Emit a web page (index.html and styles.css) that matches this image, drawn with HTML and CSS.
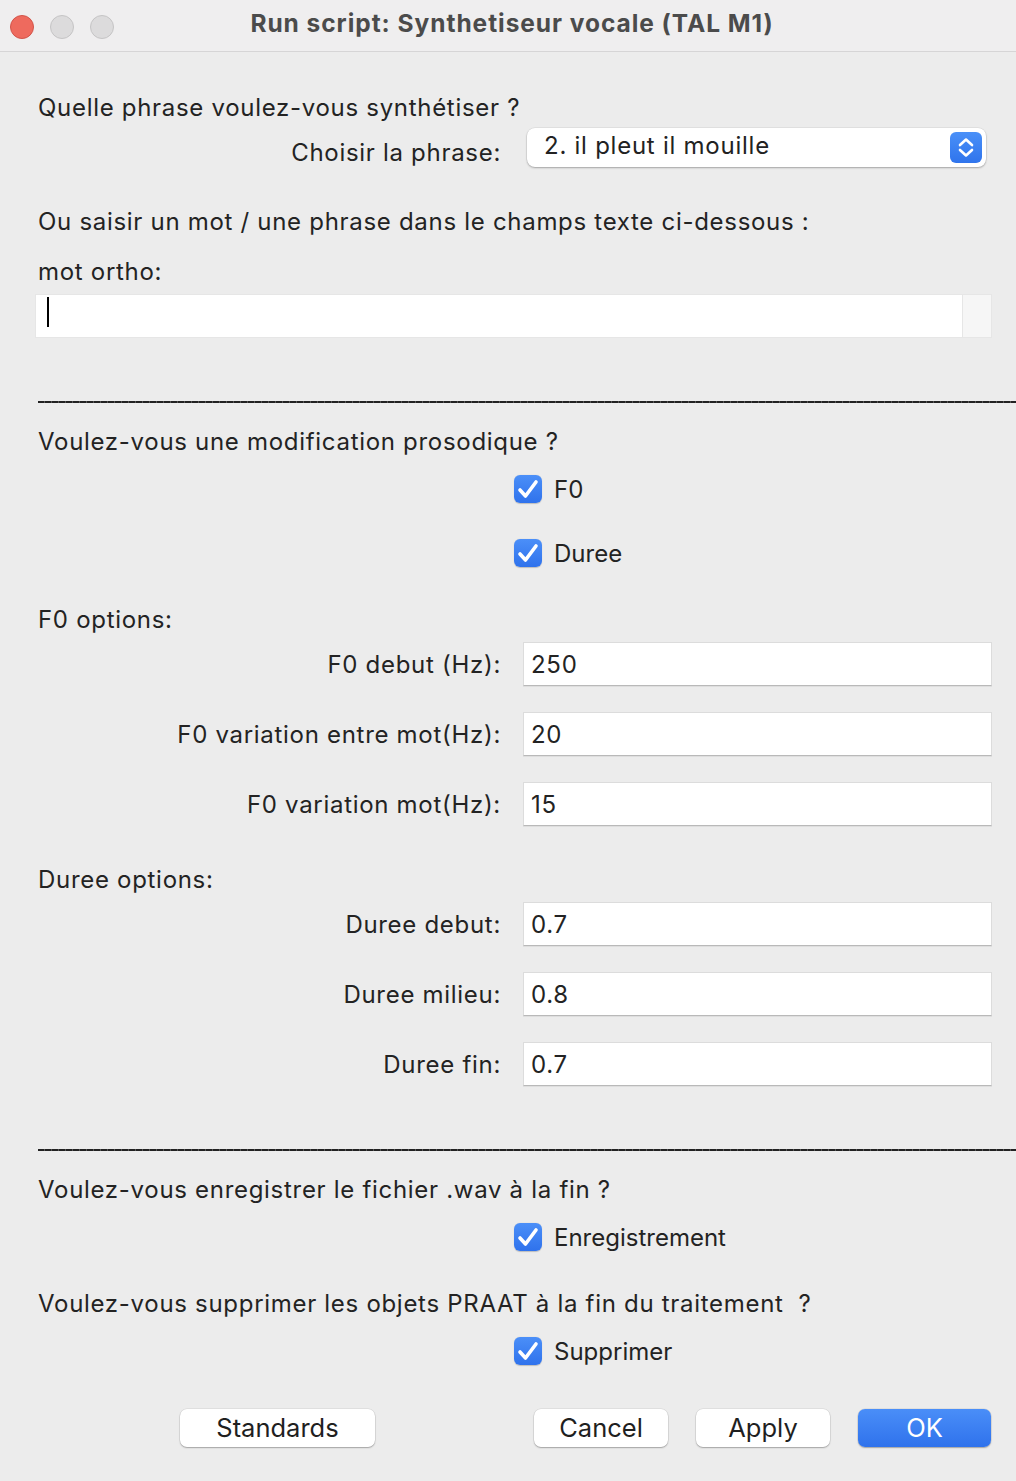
FILE: index.html
```html
<!DOCTYPE html>
<html lang="fr">
<head>
<meta charset="utf-8">
<title>Run script</title>
<link rel="stylesheet" href="styles.css">
</head>
<body>
<div class="window">
  <div class="titlebar">
    <div class="lights">
      <span class="light red"></span>
      <span class="light gray"></span>
      <span class="light gray"></span>
    </div>
    <div class="title">Run script: Synthetiseur vocale (TAL M1)</div>
  </div>

  <div class="content">
    <div class="line m40">Quelle phrase voulez-vous synthétiser ?</div>
    <div class="row select-row m3">
      <div class="label">Choisir la phrase:</div>
      <div class="select">
        <span class="select-text">2. il pleut il mouille</span>
        <span class="stepper">
          <svg width="32" height="31" viewBox="0 0 32 31">
            <path d="M10 13 L16 7.5 L22 13" fill="none" stroke="#fff" stroke-width="2.6" stroke-linecap="round" stroke-linejoin="round"/>
            <path d="M10 18 L16 23.5 L22 18" fill="none" stroke="#fff" stroke-width="2.6" stroke-linecap="round" stroke-linejoin="round"/>
          </svg>
        </span>
      </div>
    </div>
    <div class="line m39">Ou saisir un mot / une phrase dans le champs texte ci-dessous :</div>
    <div class="line m18">mot ortho:</div>
    <div class="textarea m6">
      <div class="textarea-main"><span class="caret"></span></div>
      <div class="textarea-side"></div>
    </div>

    <div class="separator m63"></div>

    <div class="line m23">Voulez-vous une modification prosodique ?</div>
    <div class="check m15"><span class="box"><svg width="28" height="28" viewBox="0 0 28 28"><path d="M6 15 L11.5 21 L22 7" fill="none" stroke="#fff" stroke-width="3.6" stroke-linecap="round" stroke-linejoin="round"/></svg></span><span class="check-label">F0</span></div>
    <div class="check m32"><span class="box"><svg width="28" height="28" viewBox="0 0 28 28"><path d="M6 15 L11.5 21 L22 7" fill="none" stroke="#fff" stroke-width="3.6" stroke-linecap="round" stroke-linejoin="round"/></svg></span><span class="check-label">Duree</span></div>

    <div class="line m35">F0 options:</div>
    <div class="row field-row m6"><div class="label">F0 debut (Hz):</div><div class="field">250</div></div>
    <div class="row field-row m26"><div class="label">F0 variation entre mot(Hz):</div><div class="field">20</div></div>
    <div class="row field-row m26"><div class="label">F0 variation mot(Hz):</div><div class="field">15</div></div>

    <div class="line m38">Duree options:</div>
    <div class="row field-row m6"><div class="label">Duree debut:</div><div class="field">0.7</div></div>
    <div class="row field-row m26"><div class="label">Duree milieu:</div><div class="field">0.8</div></div>
    <div class="row field-row m26"><div class="label">Duree fin:</div><div class="field">0.7</div></div>

    <div class="separator m63"></div>

    <div class="line m23">Voulez-vous enregistrer le fichier .wav à la fin ?</div>
    <div class="check m15"><span class="box"><svg width="28" height="28" viewBox="0 0 28 28"><path d="M6 15 L11.5 21 L22 7" fill="none" stroke="#fff" stroke-width="3.6" stroke-linecap="round" stroke-linejoin="round"/></svg></span><span class="check-label">Enregistrement</span></div>
    <div class="line m35">Voulez-vous supprimer les objets PRAAT à la fin du traitement&nbsp; ?</div>
    <div class="check m15"><span class="box"><svg width="28" height="28" viewBox="0 0 28 28"><path d="M6 15 L11.5 21 L22 7" fill="none" stroke="#fff" stroke-width="3.6" stroke-linecap="round" stroke-linejoin="round"/></svg></span><span class="check-label">Supprimer</span></div>

    <div class="buttons m42">
      <div class="btn btn-standards">Standards</div>
      <div class="btn-group">
        <div class="btn btn-cancel">Cancel</div>
        <div class="btn btn-apply">Apply</div>
        <div class="btn btn-ok">OK</div>
      </div>
    </div>
  </div>
</div>
</body>
</html>
```

FILE: styles.css
```css
* { box-sizing: border-box; }
html, body {
  margin: 0;
  padding: 0;
  background: #ececec;
}
body {
  width: 1016px;
  height: 1481px;
  overflow: hidden;
  font-family: Inter, "Liberation Sans", "Noto Sans", sans-serif;
  color: #232323;
}
.window { width: 1016px; }

.titlebar {
  height: 52px;
  background: #efeeef;
  border-bottom: 1px solid #d6d5d6;
  display: flex;
  align-items: center;
  position: relative;
}
.lights {
  display: flex;
  gap: 16px;
  padding-left: 10px;
  padding-top: 2px;
}
.light {
  width: 24px;
  height: 24px;
  border-radius: 50%;
  display: block;
}
.light.red { background: #ee6a5e; border: 1px solid #d2544a; }
.light.gray { background: #dcdbdc; border: 1px solid #c5c4c5; }
.title {
  flex: 1;
  text-align: center;
  font-weight: 700;
  font-size: 24.5px;
  letter-spacing: 0.95px;
  color: #4b4b4b;
  margin-right: 104px;
  margin-left: -2px;
  padding-bottom: 6px;
  white-space: nowrap;
}

.content {
  display: flex;
  flex-direction: column;
}
.m3 { margin-top: 3px; }
.m6 { margin-top: 6px; }
.m15 { margin-top: 15px; }
.m18 { margin-top: 18px; }
.m23 { margin-top: 23px; }
.m26 { margin-top: 26px; }
.m32 { margin-top: 32px; }
.m35 { margin-top: 35px; }
.m38 { margin-top: 38px; }
.m39 { margin-top: 39px; }
.m40 { margin-top: 40px; }
.m42 { margin-top: 42px; }
.m63 { margin-top: 63px; }

.line {
  height: 32px;
  line-height: 32px;
  padding-left: 38px;
  font-size: 24px;
  letter-spacing: 0.7px;
  white-space: nowrap;
}

.row {
  display: flex;
  align-items: center;
}
.label {
  width: 501px;
  text-align: right;
  font-size: 24px;
  letter-spacing: 0.7px;
  white-space: nowrap;
  flex: none;
}
.select-row { height: 40px; }
.select-row .label { padding-top: 10px; }
.select {
  margin-left: 26px;
  width: 459px;
  height: 39px;
  background: #fff;
  border-radius: 8px;
  box-shadow: 0 1px 2px rgba(0,0,0,0.28), 0 0 0 0.5px rgba(0,0,0,0.08);
  display: flex;
  align-items: center;
  justify-content: space-between;
  padding-left: 17px;
  padding-right: 4px;
}
.select-text { font-size: 24px; letter-spacing: 0.75px; color: #222; padding-bottom: 3px; }
.stepper {
  width: 32px;
  height: 31px;
  border-radius: 6px;
  background: linear-gradient(#4a90f8, #2f74ec);
  display: block;
}
.stepper svg { display: block; }

.textarea {
  margin-left: 35px;
  width: 957px;
  height: 44px;
  background: #e6e6e6;
  padding: 1px;
  display: flex;
  gap: 1px;
}
.textarea-main {
  width: 926px;
  background: #fff;
  position: relative;
}
.caret {
  position: absolute;
  left: 11px;
  top: 2px;
  width: 2px;
  height: 30px;
  background: #000;
}
.textarea-side {
  flex: 1;
  background: #f6f6f6;
}

.separator {
  margin-left: 38px;
  height: 2px;
  background: repeating-linear-gradient(90deg, #222 0, #222 6px, #555 6px, #555 7px);
}

.check {
  display: flex;
  align-items: center;
  height: 32px;
  padding-left: 514px;
}
.box {
  width: 28px;
  height: 28px;
  border-radius: 6px;
  background: linear-gradient(#4b8ff8, #2f72ec);
  box-shadow: 0 0.5px 1px rgba(0,0,0,0.2);
  display: block;
  flex: none;
}
.box svg { display: block; }
.check-label {
  margin-left: 12px;
  font-size: 24px;
}

.field-row { height: 44px; }
.field {
  margin-left: 22px;
  width: 469px;
  height: 44px;
  background: #fff;
  border: 1px solid #dcdcdc;
  border-bottom: 1px solid #b9b9b9;
  box-shadow: 0 1px 0 rgba(0,0,0,0.06);
  font-size: 24px;
  letter-spacing: 0.7px;
  line-height: 44px;
  padding-left: 7px;
}

.buttons {
  display: flex;
  height: 38px;
  padding-left: 180px;
}
.btn {
  height: 38px;
  border-radius: 7px;
  background: #fff;
  box-shadow: 0 1px 1.5px rgba(0,0,0,0.28), 0 0 0 0.5px rgba(0,0,0,0.1);
  font-size: 25.5px;
  line-height: 38px;
  text-align: center;
  color: #1f1f1f;
}
.btn-standards { width: 195px; }
.btn-group {
  display: flex;
  gap: 28px;
  margin-left: 159px;
}
.btn-cancel, .btn-apply { width: 134px; }
.btn-ok {
  width: 133px;
  background: linear-gradient(#4a8ef8, #2f72ec);
  color: #fff;
}
```
